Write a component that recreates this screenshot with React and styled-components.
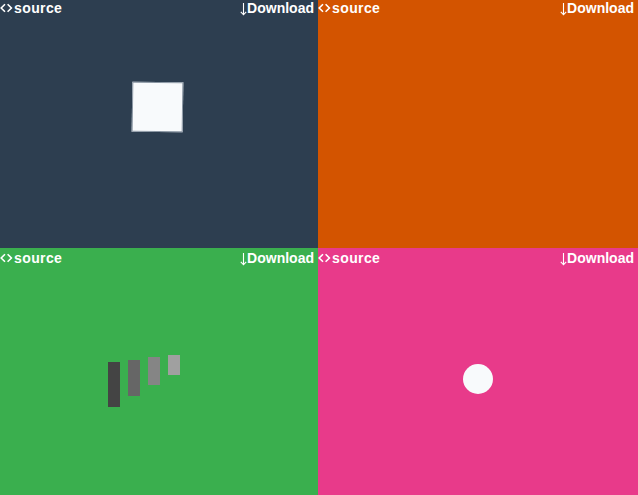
import React from "react";
import styled, { createGlobalStyle } from "styled-components";

const Global = createGlobalStyle`
  html, body { margin: 0; padding: 0; height: 100%; overflow: hidden; }
  body { font-family: "Liberation Sans", Arial, sans-serif; }
`;

const Grid = styled.div`
  display: grid;
  grid-template-columns: 318px 1fr;
  grid-template-rows: 248px 1fr;
  width: 100vw;
  height: 100vh;
`;

const Tile = styled.div`
  position: relative;
  background: ${(p) => p.$bg};
  overflow: hidden;
`;

const Bar = styled.div`
  display: flex;
  justify-content: space-between;
  align-items: flex-start;
  padding: ${(p) => p.$top}px 4px 0 0;
  color: #fff;
  font-weight: bold;
  font-size: 14px;
  line-height: 16px;
`;

const Link = styled.span`
  display: inline-flex;
  align-items: center;
  gap: ${(p) => p.$gap || 0}px;
  color: #fff;
  letter-spacing: ${(p) => p.$ls || 0}px;
`;

const Square = styled.div`
  position: absolute;
  left: 132px;
  top: 82px;
  width: 49px;
  height: 48px;
  background: #f8fafc;
  border: 1px solid #8a96a3;
  transform: rotate(0.8deg);
`;

const Rect = styled.div`
  position: absolute;
  width: 12px;
  background: ${(p) => p.$c};
`;

const Dot = styled.div`
  position: absolute;
  width: 30px;
  height: 30px;
  border-radius: 50%;
  background: #f8fafc;
`;

const CodeIcon = () => (
  <svg width="13" height="10" viewBox="0 0 13 10" style={{ marginRight: 1 }}>
    <path d="M5 1.2 L1.2 5 L5 8.8 M7.6 1.2 L11.4 5 L7.6 8.8" fill="none" stroke="#fff" strokeWidth="1.6" />
  </svg>
);

const DownIcon = () => (
  <svg width="7" height="13" viewBox="0 0 7 13" style={{ marginTop: 3 }}>
    <path d="M3.5 0 V11.5 M0.8 8.8 L3.5 11.8 L6.2 8.8" fill="none" stroke="#fff" strokeWidth="1.1" />
  </svg>
);

const Header = ({ top = 0 }) => (
  <Bar $top={top}>
    <Link $ls={0.4}>
      <CodeIcon />
      source
    </Link>
    <Link $gap={0}>
      <DownIcon />
      Download
    </Link>
  </Bar>
);

const bars = [
  { l: 108, t: 362, h: 45, c: "#444444" },
  { l: 128, t: 360, h: 36, c: "#666666" },
  { l: 148, t: 357, h: 28, c: "#858585" },
  { l: 168, t: 355, h: 20, c: "#a0a0a0" },
];

export default function App() {
  return (
    <>
      <Global />
      <Grid>
        <Tile $bg="#2d3e50">
          <Header />
          <Square />
        </Tile>
        <Tile $bg="#d35400">
          <Header />
        </Tile>
        <Tile $bg="#3aaf4e">
          <Header top={2} />
          {bars.map((b, i) => (
            <Rect
              key={i}
              $c={b.c}
              style={{ left: b.l, top: b.t - 248, height: b.h }}
            />
          ))}
        </Tile>
        <Tile $bg="#e83a8a">
          <Header top={2} />
          <Dot style={{ left: 463 - 318, top: 364 - 248 }} />
        </Tile>
      </Grid>
    </>
  );
}
